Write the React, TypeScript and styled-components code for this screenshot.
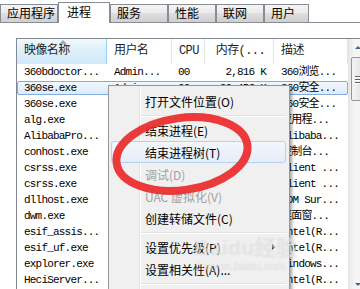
import React from "react";
import styled, { createGlobalStyle } from "styled-components";

const GlobalStyle = createGlobalStyle`
  html, body { margin: 0; padding: 0; background: #fff; }
  body { font-family: "Noto Sans CJK SC", "Noto Sans", sans-serif; }
`;

const COLS = "90px 65px 33px 69px 74px";

const Screen = styled.div`
  position: relative;
  width: 360px;
  height: 289px;
  overflow: hidden;
  background: #fff;
`;

const TabStrip = styled.div`
  display: flex;
  align-items: flex-end;
  height: 22px;
  border-bottom: 1px solid #898c95;
`;

const Tab = styled.div<{ $active?: boolean; $w: number }>`
  box-sizing: border-box;
  flex: none;
  width: ${p => p.$w}px;
  height: ${p => (p.$active ? 21 : 18)}px;
  margin-bottom: ${p => (p.$active ? -1 : 0)}px;
  padding-left: ${p => (p.$active ? 8 : 6)}px;
  border: 1px solid #898c95;
  border-bottom: none;
  background: ${p =>
    p.$active
      ? "#fff"
      : "linear-gradient(#f4f4f4, #ebebeb 45%, #dedede 50%, #d0d0d0)"};
  font-size: 12px;
  line-height: ${p => (p.$active ? 17 : 16)}px;
  color: #000;
  white-space: nowrap;
`;

const Body = styled.div`
  padding: 15px 0 0 16px;
`;

const ListView = styled.div`
  display: flex;
  height: 254px;
  border: 1px solid #828790;
  border-right: none;
  background: #fff;
`;

const Grid = styled.div`
  flex: none;
  width: 331px;
  border-right: 1px solid #e5e5e5;
`;

const HeaderRow = styled.div`
  display: grid;
  grid-template-columns: ${COLS};
  height: 24px;
  border-bottom: 1px solid #e5e5e5;
`;

const HeaderCell = styled.div<{ $sorted?: boolean; $right?: boolean }>`
  position: relative;
  box-sizing: border-box;
  padding: 0 ${p => (p.$right ? 8 : 0)}px 0 ${p => (p.$right ? 0 : 7)}px;
  text-align: ${p => (p.$right ? "right" : "left")};
  border-right: 1px solid ${p => (p.$sorted ? "#96d0f0" : "#e5e5e5")};
  background: ${p =>
    p.$sorted ? "linear-gradient(#f1f8fd, #dcf0fb 45%, #d0e9f8)" : "#fff"};
  font-family: "Liberation Mono", "Noto Sans CJK SC", monospace;
  font-size: 12px;
  letter-spacing: -0.6px;
  line-height: 25px;
  color: #1e1e1e;
  white-space: nowrap;
`;

const SortArrow = styled.span`
  position: absolute;
  top: 1px;
  left: 42px;
  border-left: 4px solid transparent;
  border-right: 4px solid transparent;
  border-bottom: 4px solid #97abc6;
`;

const Row = styled.div<{ $selected?: boolean }>`
  position: relative;
  display: grid;
  grid-template-columns: ${COLS};
  height: 16px;
  &::before {
    content: "";
    display: ${p => (p.$selected ? "block" : "none")};
    position: absolute;
    inset: 1px 0 1px 0;
    border: 1px solid #84acdd;
    border-radius: 2px;
    background: linear-gradient(#f2f8fe, #dcebfc);
  }
`;

const Cell = styled.div<{ $right?: boolean; $pad?: number }>`
  position: relative;
  padding: 0 ${p => (p.$right ? 8 : 0)}px 0 ${p => (p.$right ? 0 : p.$pad ?? 7)}px;
  text-align: ${p => (p.$right ? "right" : "left")};
  font-family: "Liberation Mono", "Noto Sans CJK SC", monospace;
  font-size: 11px;
  letter-spacing: -0.8px;
  line-height: 16px;
  color: #000;
  white-space: nowrap;
  overflow: hidden;
`;

const ScrollBar = styled.div`
  flex: none;
  width: 17px;
  display: flex;
  flex-direction: column;
  background: linear-gradient(to right, #e8e8e8, #f5f5f5 30%, #f5f5f5);
`;

const ArrowButton = styled.div<{ $down?: boolean }>`
  flex: none;
  height: 17px;
  display: flex;
  align-items: center;
  justify-content: center;
  &::after {
    content: "";
    border-left: 3px solid transparent;
    border-right: 3px solid transparent;
    ${p =>
      p.$down
        ? "border-top: 3px solid #4d6185;"
        : "border-bottom: 3px solid #4d6185;"}
  }
`;

const Thumb = styled.div`
  flex: none;
  height: 44px;
  margin: 1px 1px 0 2px;
  box-sizing: border-box;
  border: 1px solid #979797;
  border-radius: 2px;
  background: linear-gradient(to right, #f4f4f4, #ebebeb 50%, #dadada);
  display: flex;
  flex-direction: column;
  justify-content: center;
  align-items: center;
  gap: 2px;
`;

const Grip = styled.span`
  width: 7px;
  height: 1px;
  background: #5f5f5f;
  box-shadow: 0 1px 0 #fff;
`;

const Track = styled.div`
  flex: 1;
`;

const Menu = styled.div`
  position: absolute;
  left: 108px;
  top: 85px;
  width: 182px;
  height: 220px;
  box-sizing: border-box;
  padding: 4px 3px 0 2px;
  border: 1px solid #979797;
  background: linear-gradient(
    to right,
    #f0f0f0 30px,
    #e2e3e3 30px,
    #e2e3e3 31px,
    #ffffff 31px,
    #ffffff 32px,
    #f0f0f0 32px
  );
  box-shadow: 2px 2px 3px rgba(0, 0, 0, 0.35);
`;

const MenuItem = styled.div<{ $disabled?: boolean; $hover?: boolean }>`
  box-sizing: border-box;
  display: flex;
  align-items: center;
  height: 22px;
  padding-left: 33px;
  border: 1px solid ${p => (p.$hover ? "#b8d2ee" : "transparent")};
  border-radius: 3px;
  background: ${p =>
    p.$hover ? "linear-gradient(#f3f7fc, #e4edf8)" : "transparent"};
  font-size: 12px;
  color: ${p => (p.$disabled ? "#a0a0a0" : "#000")};
  white-space: nowrap;
`;

const SubArrow = styled.span`
  margin-left: auto;
  margin-right: 10px;
  border-top: 3px solid transparent;
  border-bottom: 3px solid transparent;
  border-left: 3px solid #000;
`;

const Separator = styled.div`
  height: 7px;
  margin-left: 30px;
  display: flex;
  flex-direction: column;
  justify-content: center;
  &::before {
    content: "";
    height: 1px;
    background: #e2e3e3;
    box-shadow: 0 1px 0 #fff;
  }
`;

const Circle = styled.svg`
  position: absolute;
  left: 0;
  top: 0;
  pointer-events: none;
`;

const Watermark = styled.div`
  position: absolute;
  left: 194px;
  top: 236px;
  color: rgba(255, 255, 255, 0.5);
  text-shadow: 0 0 1px rgba(120, 120, 120, 0.3);
  pointer-events: none;
`;

const MarkTitle = styled.div`
  font-family: "Liberation Sans", "Noto Sans CJK SC", sans-serif;
  font-size: 21px;
  font-weight: bold;
  line-height: 24px;
  letter-spacing: 0.5px;
`;

const MarkUrl = styled.div`
  font-family: "Liberation Sans", sans-serif;
  font-size: 11px;
  line-height: 12px;
  padding-left: 2px;
`;

const tabs = [
  { label: "应用程序", w: 58 },
  { label: "进程", w: 52, active: true },
  { label: "服务", w: 58 },
  { label: "性能", w: 48 },
  { label: "联网", w: 48 },
  { label: "用户", w: 45 },
];

// columns 2-4 of the rows under the context menu are hidden, so left blank
const rows = [
  ["360bdoctor...", "Admin...", "00", "2,816 K", "360浏览..."],
  ["360se.exe", "Admin...", "00", "60,456 K", "360安全..."],
  ["360se.exe", "", "", "", "360安全..."],
  ["alg.exe", "", "", "", "应用程..."],
  ["AlibabaPro...", "", "", "", "Alibaba..."],
  ["conhost.exe", "", "", "", "控制台..."],
  ["csrss.exe", "", "", "", "Client ..."],
  ["csrss.exe", "", "", "", "Client ..."],
  ["dllhost.exe", "", "", "", "COM Sur..."],
  ["dwm.exe", "", "", "", "桌面窗..."],
  ["esif_assis...", "", "", "", "Intel(R..."],
  ["esif_uf.exe", "", "", "", "Intel(R..."],
  ["explorer.exe", "", "", "", "Windows..."],
  ["HeciServer...", "", "", "", "Intel(R..."],
];

type Entry =
  | { kind: "item"; label: string; disabled?: boolean; hover?: boolean; sub?: boolean }
  | { kind: "sep" };

const menu: Entry[] = [
  { kind: "item", label: "打开文件位置(O)" },
  { kind: "sep" },
  { kind: "item", label: "结束进程(E)" },
  { kind: "item", label: "结束进程树(T)", hover: true },
  { kind: "item", label: "调试(D)", disabled: true },
  { kind: "item", label: "UAC 虚拟化(V)", disabled: true },
  { kind: "item", label: "创建转储文件(C)" },
  { kind: "sep" },
  { kind: "item", label: "设置优先级(P)", sub: true },
  { kind: "item", label: "设置相关性(A)..." },
  { kind: "sep" },
];

export default function App() {
  return (
    <Screen>
      <GlobalStyle />
      <TabStrip>
        {tabs.map(t => (
          <Tab key={t.label} $w={t.w} $active={t.active}>
            {t.label}
          </Tab>
        ))}
      </TabStrip>
      <Body>
        <ListView>
          <Grid>
            <HeaderRow>
              <HeaderCell $sorted>
                <SortArrow />
                映像名称
              </HeaderCell>
              <HeaderCell>用户名</HeaderCell>
              <HeaderCell>CPU</HeaderCell>
              <HeaderCell $right>内存(...</HeaderCell>
              <HeaderCell>描述</HeaderCell>
            </HeaderRow>
            {rows.map((r, i) => (
              <Row key={i} $selected={i === 1}>
                <Cell>{r[0]}</Cell>
                <Cell>{r[1]}</Cell>
                <Cell $pad={6}>{r[2]}</Cell>
                <Cell $right>{r[3]}</Cell>
                <Cell>{r[4]}</Cell>
              </Row>
            ))}
          </Grid>
          <ScrollBar>
            <ArrowButton />
            <Thumb>
              <Grip />
              <Grip />
              <Grip />
            </Thumb>
            <Track />
            <ArrowButton $down />
          </ScrollBar>
        </ListView>
      </Body>

      <Menu>
        {menu.map((m, i) =>
          m.kind === "sep" ? (
            <Separator key={i} />
          ) : (
            <MenuItem key={i} $disabled={m.disabled} $hover={m.hover}>
              {m.label}
              {m.sub && <SubArrow />}
            </MenuItem>
          )
        )}
      </Menu>

      <Watermark>
        <MarkTitle>Baidu经验</MarkTitle>
        <MarkUrl>jingyan.baidu.com</MarkUrl>
      </Watermark>

      <Circle width="360" height="289" viewBox="0 0 360 289">
        <ellipse
          cx="182"
          cy="154"
          rx="66"
          ry="36"
          transform="rotate(-8 182 154)"
          fill="none"
          stroke="#ec2a2a"
          strokeWidth="8"
          opacity="0.92"
        />
      </Circle>
    </Screen>
  );
}
